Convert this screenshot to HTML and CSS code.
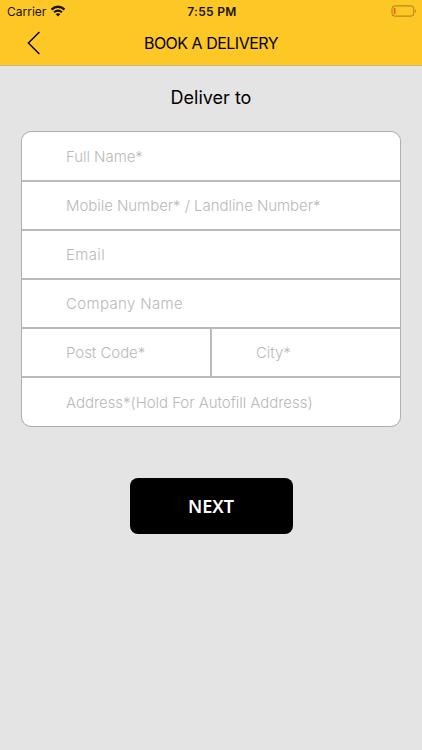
FILE: index.html
```
<!DOCTYPE html>
<html lang="en">
<head>
  <meta charset="utf-8">
  <title>Book a Delivery</title>
  <link rel="stylesheet" href="styles.css">
</head>

<body>

  <header class="top">
    <div class="status-bar">
      <div class="carrier">
        <span>Carrier</span>
        <svg class="wifi" viewBox="0 0 16 12">
          <path d="M1.5 4.5Q8 -1 14.5 4.5" stroke-width="2.3"/>
          <path d="M4 7.2Q8 4 12 7.2" stroke-width="2"/>
          <path d="M8 11.5L5.6 9.1Q8 7.3 10.4 9.1Z" fill="#17130a" stroke="none"/>
        </svg>
      </div>
      <span class="time">7:55 PM</span>
      <svg class="battery" viewBox="0 0 26 12">
        <rect x="1" y="0.9" width="21.8" height="10.2" rx="2.6" fill="none" stroke="#a27f16"/>
        <rect x="2.8" y="2.8" width="1.6" height="6.4" rx="0.6" fill="#f4511e"/>
        <path d="M24.2 4.3Q25.6 6 24.2 7.7Z" fill="#6f5713"/>
      </svg>
    </div>
    <div class="nav-bar">
      <button class="back" aria-label="Back">
        <svg viewBox="0 0 14 24"><path d="M12.4 1L1.4 12L12.4 23"/></svg>
      </button>
      <h1>BOOK A DELIVERY</h1>
    </div>
  </header>

  <main>
    <h2>Deliver to</h2>
    <form>
      <div class="fields">
        <input class="name" type="text" placeholder="Full Name*">
        <input class="phone" type="text" placeholder="Mobile Number* / Landline Number*">
        <input class="email" type="text" placeholder="Email">
        <input class="company" type="text" placeholder="Company Name">
        <div class="split">
          <input class="post-code" type="text" placeholder="Post Code*">
          <input class="city" type="text" placeholder="City*">
        </div>
        <input class="address" type="text" placeholder="Address*(Hold For Autofill Address)">
      </div>
      <button class="next" type="button">NEXT</button>
    </form>
  </main>

</body>
</html>
```
FILE: styles.css
```
* {
  box-sizing: border-box;
}

body {
  margin: 0;
  height: 750px;
  overflow: hidden;
  background-color: #e4e4e4;
  font-family: Inter, sans-serif;
  color: #000;
}

.top {
  height: 66px;
  background-color: #fdc826;
  border-bottom: 1px solid #d0b96c;
}

.status-bar {
  display: grid;
  grid-template-columns: 1fr auto 1fr;
  align-items: center;
  height: 22px;
  padding: 0 5px 0 7px;
  color: #17130a;
}

.carrier {
  display: flex;
  align-items: center;
  gap: 4px;
  font-size: 12px;
}

.wifi {
  width: 16px;
  height: 12px;
  fill: none;
  stroke: #17130a;
}

.time {
  font-size: 12px;
  font-weight: 600;
  letter-spacing: 0.3px;
}

.battery {
  width: 26px;
  height: 12px;
  justify-self: end;
}

.nav-bar {
  display: grid;
  grid-template-columns: 67px 1fr 67px;
  align-items: center;
  height: 42px;
}

.back {
  display: flex;
  justify-content: center;
  padding: 0;
  border: none;
  background: none;
}

.back svg {
  width: 14px;
  height: 24px;
  fill: none;
  stroke: #000;
  stroke-width: 1.4;
}

h1 {
  margin: 0;
  font-size: 16px;
  font-weight: 400;
  line-height: 24px;
  letter-spacing: -0.5px;
  text-align: center;
}

main {
  padding: 19px 21px 0;
}

h2 {
  margin: 0 0 20px;
  font-size: 18px;
  font-weight: 400;
  line-height: 26px;
  text-align: center;
}

.fields {
  display: grid;
  grid-template-rows: 48px repeat(4, 47px) 48px;
  gap: 2px;
  border: 1px solid #b0b0b0;
  border-radius: 10px;
  background-color: #bababa;
  overflow: hidden;
}

.split {
  display: grid;
  grid-template-columns: 1fr 1fr;
  gap: 2px;
}

input {
  width: 100%;
  min-width: 0;
  padding: 0 0 0 44px;
  border: none;
  background-color: #fff;
  font-family: Inter, sans-serif;
  font-size: 15px;
  font-weight: 300;
  letter-spacing: -0.05px;
}

input::placeholder {
  color: #b9b9bc;
  opacity: 1;
}

.email,
.company {
  letter-spacing: 0.35px;
}

.next {
  display: block;
  width: 163px;
  height: 56px;
  margin: 51px auto 0;
  border: none;
  border-radius: 8px;
  background-color: #000;
  color: #fff;
  font-family: "Noto Sans", sans-serif;
  font-size: 18px;
  font-weight: 600;
}
```
